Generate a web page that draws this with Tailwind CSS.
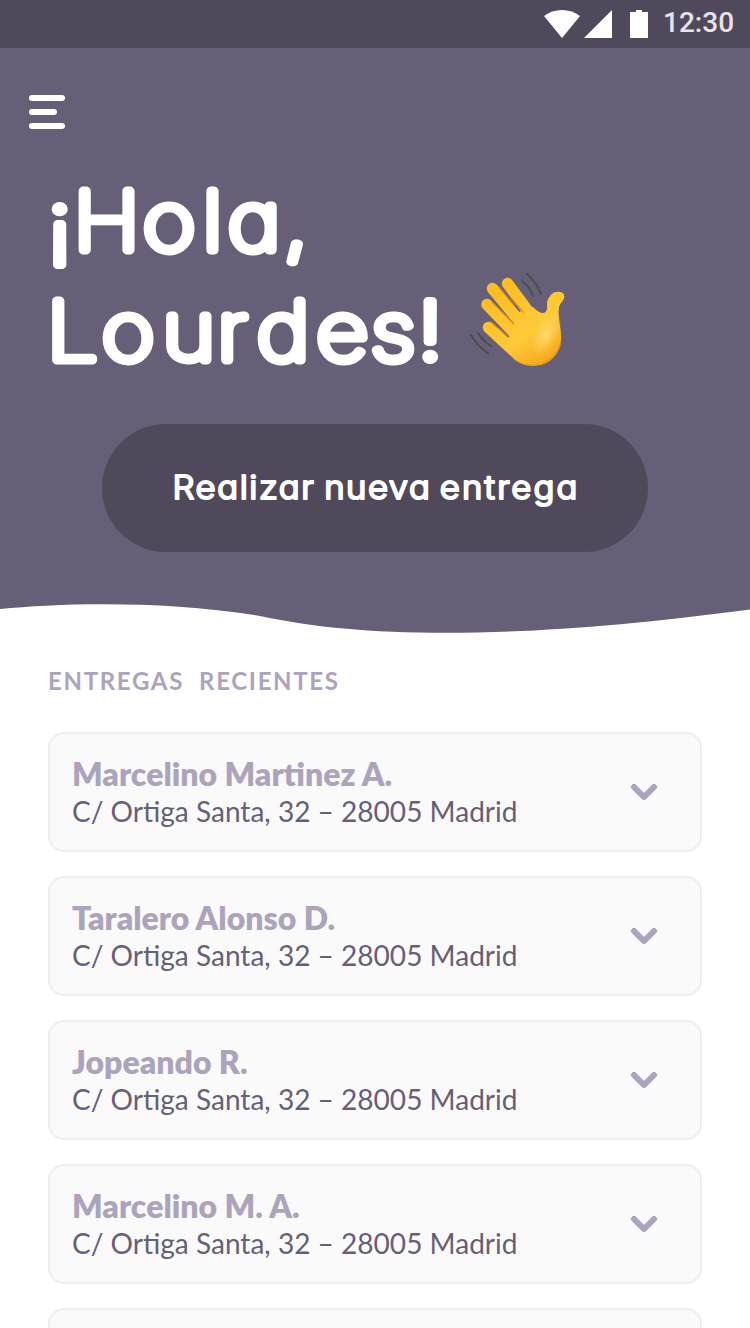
<!DOCTYPE html>
<html lang="es">
<head>
<meta charset="utf-8">
<title>Entregas</title>
<script src="https://cdn.jsdelivr.net/npm/@tailwindcss/browser@4"></script>
</head>
<body class="w-[750px] h-[1328px] overflow-hidden bg-white font-['Lato',sans-serif]">
<div class="flex h-[1328px] flex-col overflow-hidden">
  <div class="flex h-12 shrink-0 items-center justify-end bg-[#50495c]">
    <svg class="h-12 w-[120px]" viewBox="536 0 120 48" fill="#fff">
      <path d="M544 16C554 8 570 8 580 16L562 38Z"/>
      <path d="M612 10V38H584Z"/>
      <path d="M630 12H636V10H642V12H648V38H630Z"/>
    </svg>
    <span class="mr-4 ml-[7px] h-12 w-[71px] whitespace-nowrap font-['Roboto',sans-serif] text-[28px] leading-[46px] font-medium text-white/85">12:30</span>
  </div>

  <header class="flex h-[552px] shrink-0 flex-col bg-[#675f77]">
    <button class="mt-[47px] ml-[29px] flex h-[34px] w-9 flex-col justify-between" aria-label="Menú">
      <span class="h-1.5 w-9 rounded-full bg-white"></span>
      <span class="h-1.5 w-7 rounded-full bg-white"></span>
      <span class="h-1.5 w-9 rounded-full bg-white"></span>
    </button>
    <h1 class="mt-[41px] h-[210px] font-['Inter',sans-serif] font-thin">
      <svg class="h-[210px] w-[750px]" viewBox="0 170 750 210">
        <defs>
          <linearGradient id="skin" gradientUnits="userSpaceOnUse" x1="482" y1="280" x2="545" y2="368"><stop offset="0" stop-color="#fcb91c"/><stop offset="0.65" stop-color="#ffca38"/><stop offset="1" stop-color="#f5a51b"/></linearGradient>
          <radialGradient id="palm"><stop offset="0" stop-color="#ffdc70"/><stop offset="1" stop-color="#ffd050" stop-opacity="0"/></radialGradient>
        </defs>
        <g class="[font-feature-settings:'cv11']" fill="#fff" stroke="#fff" stroke-width="9" stroke-linejoin="round" font-size="80.5" transform="scale(1.12 1)">
          <text y="249.8" x="42.3 65.600 127.700 181 203.500 253.500"><tspan class="font-extralight" stroke-width="8">¡</tspan>Hola,</text>
          <text y="359.8" x="42 91 145 194.300 229.500 282.500 331 373">Lourdes<tspan class="font-extralight" stroke-width="8">!</tspan></text>
        </g>
        <g stroke="url(#skin)" stroke-width="11.5" stroke-linecap="round">
          <path d="M507.500 283.500L533 318M492.500 288.500L525 328M487 304.500L521 340M488.500 327.500L514 351"/>
        </g>
        <path d="M519 312L533 307Q539 313 543 313C548 312 547 307 547 302C550 293 555 291 560 292C566 293 565 299 561 303C558 307 558 313 560 326C562 337 562 348 554 357C544 368 526 369 514 359L500 344L509 337L514 324Z" fill="url(#skin)"/>
        <ellipse cx="546" cy="334" rx="13" ry="25" fill="url(#palm)" transform="rotate(25 546 334)"/>
        <g fill="none" stroke="#d28a24" stroke-width="1.6" stroke-linecap="round">
          <path d="M491 322L509 337M492 302L514 324M499 287L504 293M512 299L523 312M504 293L514 305"  opacity=".8"/>
          <path d="M515 360Q527 368 541 364Q558 357 561 342" opacity=".45"/>
        </g>
        <g fill="none" stroke="#4b4d51" stroke-width="2" stroke-linecap="round"><path d="M527 274Q536 282 541 294M522 281Q530 287 533 296M471 335Q478 347 488 353M478 333Q483 341 491 346"/></g>
      </svg>
    </h1>
    <button class="mt-[44px] h-32 w-[546px] self-center rounded-full bg-[#50495c] font-['Inter',sans-serif] font-light">
      <svg class="h-32 w-[546px]" viewBox="102 424 546 128">
        <g class="[font-feature-settings:'cv11']" fill="#fff" stroke="#fff" stroke-width="2.1" stroke-linejoin="round" font-size="33" transform="scale(1.05 1)">
          <text x="164.300" y="499" textLength="134.500">Realizar</text>
          <text x="308.800" y="499" textLength="100.500">nueva</text>
          <text x="418.800" y="499" textLength="131.200">entrega</text>
        </g>
      </svg>
    </button>
  </header>
  <svg class="-mt-px h-10 w-[750px] shrink-0" viewBox="0 599 750 40"><path d="M0 599H750V609.500C520 640 366 639 260 616C165 600 60 603 0 609Z" fill="#675f77"/></svg>

  <main class="flex flex-col px-12">
    <h2 class="mt-[26px] h-8 whitespace-pre text-2xl leading-8 font-bold tracking-[1.68px] text-[#aca4bc]">ENTREGAS  RECIENTES</h2>
    <div class="mt-[35px] flex flex-col gap-6">
      <article class="flex h-[120px] shrink-0 items-center justify-between rounded-2xl border-2 border-[#eee] bg-[#fafafa] pr-[42px] pl-[22px]">
        <div><h3 class="text-[32px] leading-[38px] font-extrabold text-[#aca4bc]">Marcelino Martinez A.</h3><p class="text-[28.05px] leading-9 text-[#675f77]">C/ Ortiga Santa, 32 – 28005 Madrid</p></div>
        <svg class="mb-px h-4 w-[28px]" viewBox="0 0 28 16" fill="none" stroke="#aca4bc" stroke-width="6" stroke-linecap="round" stroke-linejoin="round"><path d="M4 3L14 13L24 3"/></svg>
      </article>
      <article class="flex h-[120px] shrink-0 items-center justify-between rounded-2xl border-2 border-[#eee] bg-[#fafafa] pr-[42px] pl-[22px]">
        <div><h3 class="text-[32px] leading-[38px] font-extrabold text-[#aca4bc]">Taralero Alonso D.</h3><p class="text-[28.05px] leading-9 text-[#675f77]">C/ Ortiga Santa, 32 – 28005 Madrid</p></div>
        <svg class="mb-px h-4 w-[28px]" viewBox="0 0 28 16" fill="none" stroke="#aca4bc" stroke-width="6" stroke-linecap="round" stroke-linejoin="round"><path d="M4 3L14 13L24 3"/></svg>
      </article>
      <article class="flex h-[120px] shrink-0 items-center justify-between rounded-2xl border-2 border-[#eee] bg-[#fafafa] pr-[42px] pl-[22px]">
        <div><h3 class="text-[32px] leading-[38px] font-extrabold text-[#aca4bc]">Jopeando R.</h3><p class="text-[28.05px] leading-9 text-[#675f77]">C/ Ortiga Santa, 32 – 28005 Madrid</p></div>
        <svg class="mb-px h-4 w-[28px]" viewBox="0 0 28 16" fill="none" stroke="#aca4bc" stroke-width="6" stroke-linecap="round" stroke-linejoin="round"><path d="M4 3L14 13L24 3"/></svg>
      </article>
      <article class="flex h-[120px] shrink-0 items-center justify-between rounded-2xl border-2 border-[#eee] bg-[#fafafa] pr-[42px] pl-[22px]">
        <div><h3 class="text-[32px] leading-[38px] font-extrabold text-[#aca4bc]">Marcelino M. A.</h3><p class="text-[28.05px] leading-9 text-[#675f77]">C/ Ortiga Santa, 32 – 28005 Madrid</p></div>
        <svg class="mb-px h-4 w-[28px]" viewBox="0 0 28 16" fill="none" stroke="#aca4bc" stroke-width="6" stroke-linecap="round" stroke-linejoin="round"><path d="M4 3L14 13L24 3"/></svg>
      </article>
      <article class="h-[120px] shrink-0 rounded-2xl border-2 border-[#eee] bg-[#fafafa]"></article>
    </div>
  </main>
</div>
</body>
</html>
